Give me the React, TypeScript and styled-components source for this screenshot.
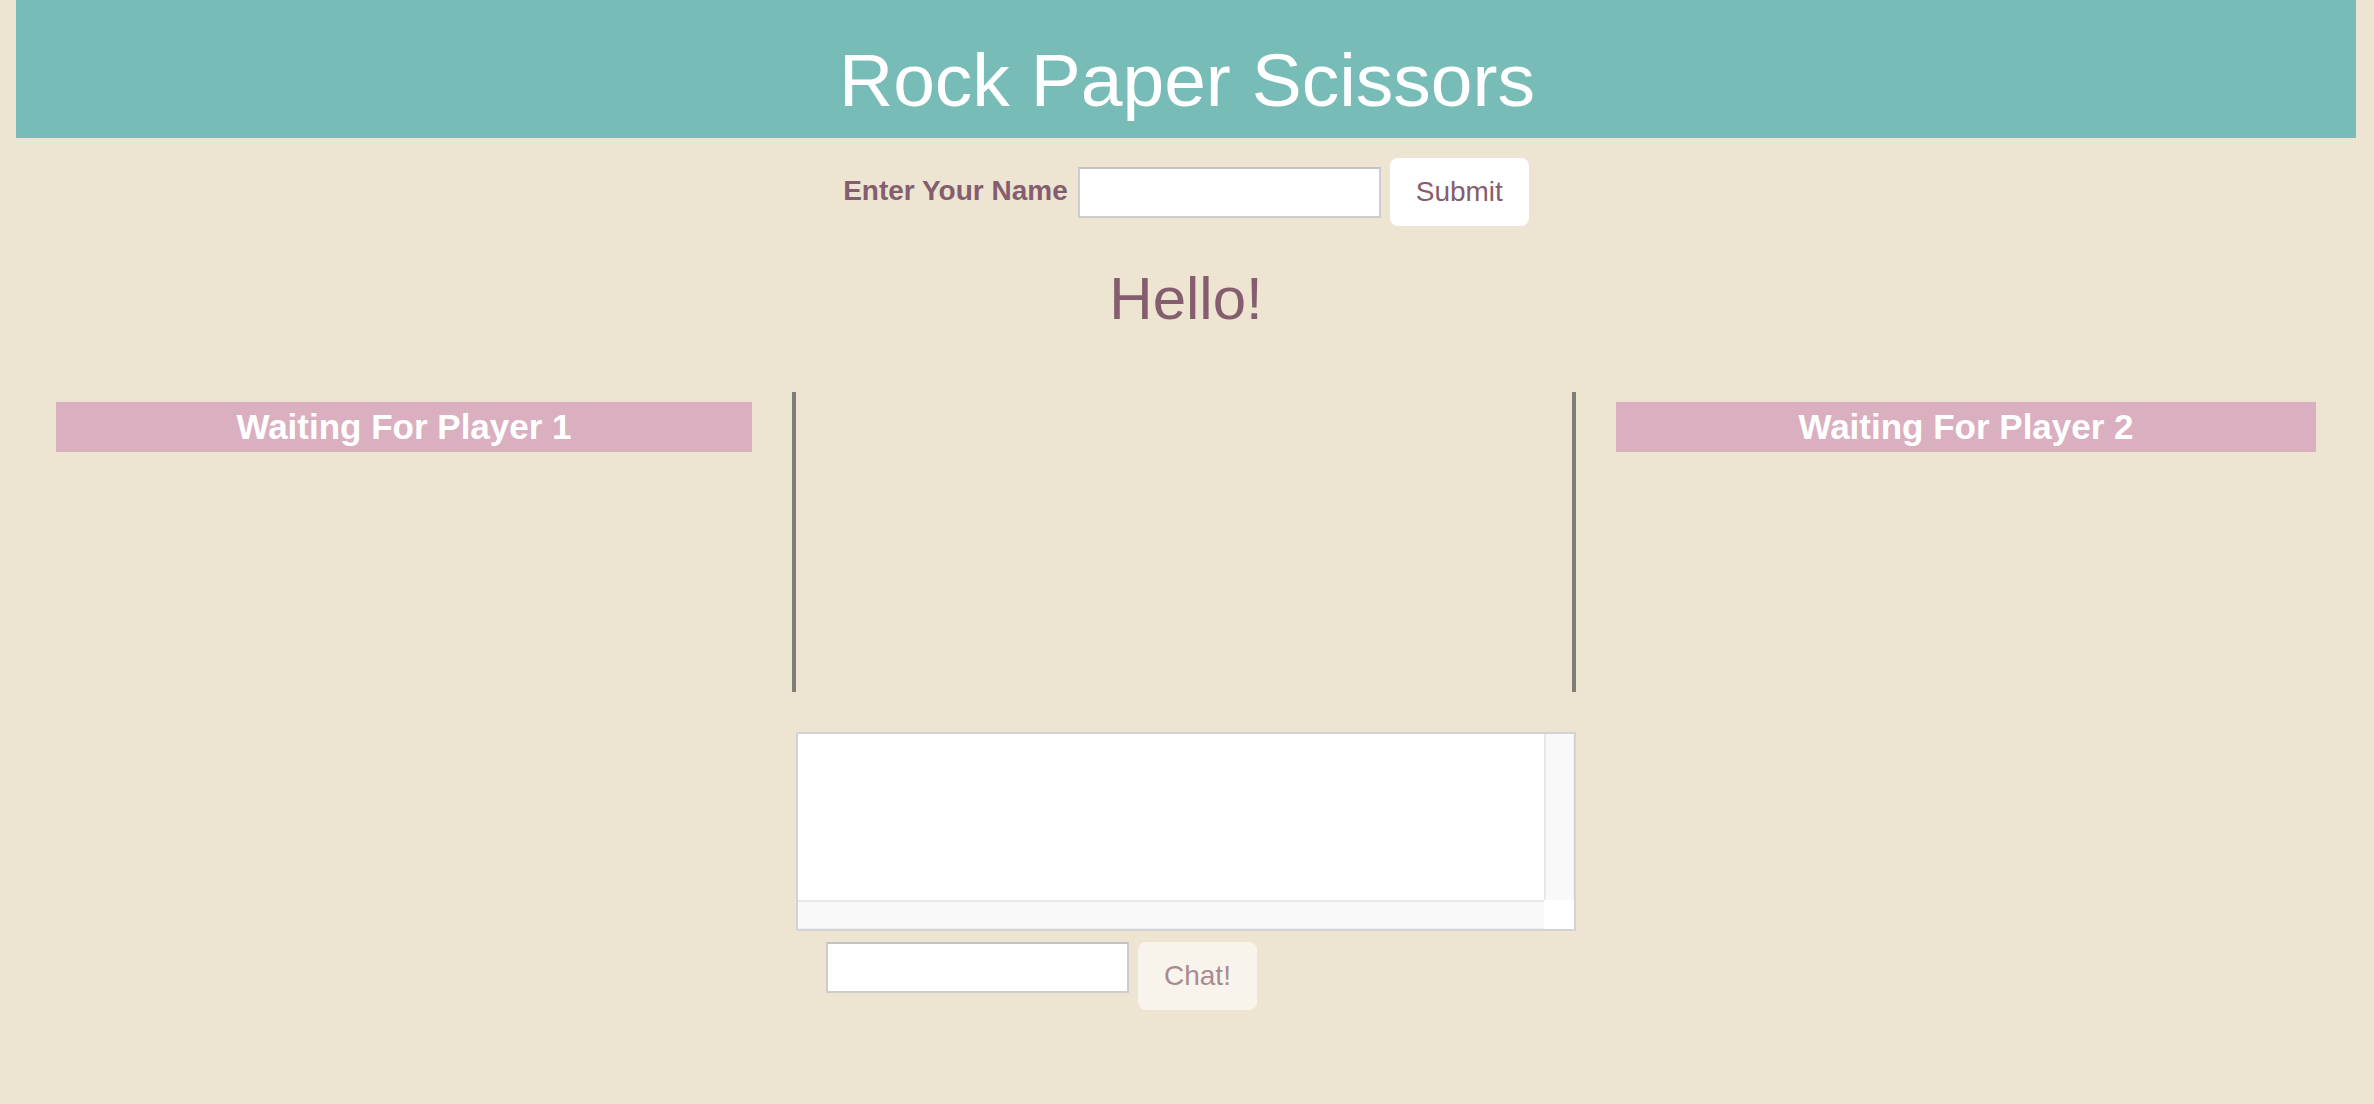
import React from "react";
import styled, { createGlobalStyle } from "styled-components";

const GlobalStyle = createGlobalStyle`
  html, body {
    margin: 0;
    padding: 0;
    background: #ede5d1;
    font-family: "Liberation Sans", Arial, Helvetica, sans-serif;
  }
  * { box-sizing: border-box; }
`;

const Page = styled.div`
  min-height: 1104px;
  padding: 0 18px 0 16px;
  background: #ede5d1;
`;

const Header = styled.header`
  height: 138px;
  padding-top: 43px;
  background: #78bcb7;
  text-align: center;
`;

const Title = styled.h1`
  margin: 0;
  font-size: 75px;
  line-height: 74px;
  font-weight: 400;
  color: #ffffff;
  padding-left: 2px;
`;

const NameForm = styled.form`
  display: flex;
  justify-content: center;
  align-items: center;
  gap: 9px;
  margin-top: 20px;
  height: 68px;
`;

const Label = styled.label`
  font-size: 28px;
  font-weight: 700;
  color: #845e6e;
  margin-right: 1px;
  margin-top: -2px;
`;

const TextInput = styled.input<{ $width: number }>`
  width: ${(p) => p.$width}px;
  height: 51px;
  border: 2px solid #cdcdcd;
  border-top-color: #c2c2c2;
  background: #ffffff;
  font-size: 24px;
  font-family: inherit;
  outline: none;
`;

const Button = styled.button<{ $muted?: boolean }>`
  height: 68px;
  padding: 0 26px;
  border: none;
  border-radius: 8px;
  background: ${(p) => (p.$muted ? "#f8f4ec" : "#ffffff")};
  color: ${(p) => (p.$muted ? "#a88b90" : "#845e6e")};
  font-family: "Liberation Sans", Arial, Helvetica, sans-serif;
  font-size: 28px;
  cursor: pointer;
`;

const Greeting = styled.h2`
  margin: 43px 0 0;
  text-align: center;
  font-size: 60px;
  line-height: 60px;
  font-weight: 400;
  color: #845e6e;
`;

const GameRow = styled.div`
  display: grid;
  grid-template-columns: 776fr 784fr 780fr;
  margin-top: 63px;
`;

const PlayerColumn = styled.section`
  padding: 10px 40px 0;
`;

const Arena = styled.section`
  height: 300px;
  border-left: 4px solid #7e7d78;
  border-right: 4px solid #7e7d78;
`;

const PlayerBanner = styled.h3`
  margin: 0;
  height: 50px;
  line-height: 50px;
  background: #daafbf;
  color: #ffffff;
  font-size: 35px;
  font-weight: 700;
  text-align: center;
`;

const ChatRow = styled.div`
  display: grid;
  grid-template-columns: 1fr 1fr 1fr;
  margin-top: 40px;
`;

const ChatColumn = styled.section`
  grid-column: 2;
`;

const ChatBox = styled.div`
  height: 199px;
  border: 2px solid #d3d3d5;
  display: grid;
  grid-template-columns: 1fr 30px;
  grid-template-rows: 1fr 29px;
  background: #ffffff;
`;

const ChatLog = styled.div`
  background: #ffffff;
`;

const ScrollTrack = styled.div<{ $vertical?: boolean }>`
  background: #f9f9f9;
  ${(p) =>
    p.$vertical
      ? `border-left: 2px solid #e8e8e8; border-right: 1px solid #efefef;`
      : `border-top: 2px solid #e8e8e8; border-bottom: 1px solid #efefef;`}
`;

const ScrollCorner = styled.div`
  background: #ffffff;
`;

const ChatForm = styled.form`
  display: flex;
  align-items: flex-start;
  gap: 9px;
  margin-top: 11px;
  padding-left: 30px;
`;

export default function App() {
  return (
    <Page>
      <GlobalStyle />
      <Header>
        <Title>Rock Paper Scissors</Title>
      </Header>
      <NameForm onSubmit={(e) => e.preventDefault()}>
        <Label htmlFor="name">Enter Your Name</Label>
        <TextInput id="name" type="text" $width={303} />
        <Button type="submit">Submit</Button>
      </NameForm>
      <Greeting>Hello!</Greeting>
      <GameRow>
        <PlayerColumn>
          <PlayerBanner>Waiting For Player 1</PlayerBanner>
        </PlayerColumn>
        <Arena />
        <PlayerColumn>
          <PlayerBanner>Waiting For Player 2</PlayerBanner>
        </PlayerColumn>
      </GameRow>
      <ChatRow>
        <ChatColumn>
          <ChatBox>
            <ChatLog />
            <ScrollTrack $vertical />
            <ScrollTrack />
            <ScrollCorner />
          </ChatBox>
          <ChatForm onSubmit={(e) => e.preventDefault()}>
            <TextInput type="text" $width={303} />
            <Button type="submit" $muted>
              Chat!
            </Button>
          </ChatForm>
        </ChatColumn>
      </ChatRow>
    </Page>
  );
}
